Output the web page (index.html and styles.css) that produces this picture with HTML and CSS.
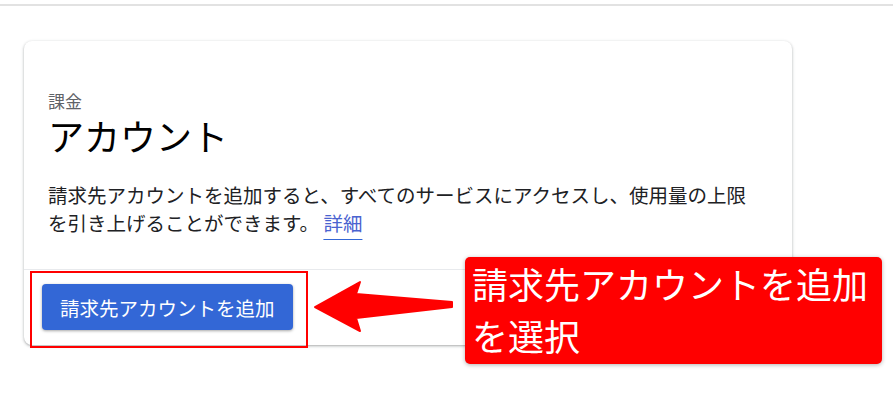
FILE: index.html
```html
<!DOCTYPE html>
<html lang="ja">
<head>
    <meta charset="UTF-8">
    <meta name="viewport" content="width=device-width, initial-scale=1.0">
    <title>課金 - アカウント</title>
    <link rel="stylesheet" href="styles.css">
</head>
<body>
    <div class="page">
        <div class="top-bar"></div>

        <main class="content">
            <section class="card">
                <div class="card-body">
                    <div class="overline">課金</div>
                    <h1 class="card-title">アカウント</h1>
                    <p class="card-text">請求先アカウントを追加すると、すべてのサービスにアクセスし、使用量の上限を引き上げることができます。 <a href="#" class="link">詳細</a></p>
                </div>
                <div class="card-actions">
                    <button class="btn-primary">請求先アカウントを追加</button>
                </div>
            </section>
        </main>

        <!-- annotations drawn over the screenshot -->
        <div class="highlight-box"></div>
        <svg class="arrow" width="150" height="60" viewBox="0 0 150 60">
            <polygon points="5,29 50,4 46,16 142,24 142,29 46,40 50,53" fill="#ff0000" stroke="#ff0000" stroke-width="2" stroke-linejoin="round"/>
        </svg>
        <div class="callout">請求先アカウントを追加<br>を選択</div>
    </div>
</body>
</html>
```

FILE: styles.css
```css
body {
    margin: 0;
    background: #fff;
    font-family: "Noto Sans CJK JP", "Noto Sans", sans-serif;
    color: #202124;
}

.page {
    position: relative;
    width: 893px;
    height: 408px;
    overflow: hidden;
}

.top-bar {
    margin-top: 4px;
    height: 2px;
    background: #e2e2e2;
}

.content {
    padding: 35px 0 0 24px;
}

.card {
    width: 768px;
    height: 304px;
    box-sizing: border-box;
    background: #fff;
    border-radius: 8px;
    box-shadow: 0 1px 2px rgba(60, 64, 67, 0.3), 0 1px 3px 1px rgba(60, 64, 67, 0.12);
    display: flex;
    flex-direction: column;
}

.card-body {
    padding: 50px 24px 0 24px;
    height: 229px;
    box-sizing: border-box;
    border-bottom: 1px solid #e8eaed;
}

.overline {
    font-size: 17px;
    line-height: 20px;
    color: #5f6368;
}

.card-title {
    margin: 2px 0 0 0;
    font-size: 36px;
    font-weight: 400;
    line-height: 44px;
    color: #000;
}

.card-text {
    margin: 24px 0 0 0;
    max-width: 710px;
    font-size: 19.5px;
    line-height: 28px;
}

.link {
    color: #4a63d0;
    text-decoration: underline;
    text-decoration-color: #3367d6;
    text-underline-offset: 8px;
}

.card-actions {
    padding: 14px 18px;
}

.btn-primary {
    height: 46px;
    padding: 0 18px;
    border: none;
    border-radius: 4px;
    background: #3367d6;
    color: #fff;
    font-family: inherit;
    font-size: 19.5px;
    box-shadow: 0 1px 3px rgba(0, 0, 0, 0.35);
}

.highlight-box {
    position: absolute;
    left: 30px;
    top: 271px;
    width: 274px;
    height: 73px;
    border: 2px solid #ff0000;
}

.arrow {
    position: absolute;
    left: 310px;
    top: 278px;
}

.callout {
    position: absolute;
    left: 465px;
    top: 257px;
    width: 417px;
    height: 107px;
    box-sizing: border-box;
    padding-left: 7px;
    background: #ff0000;
    border-radius: 5px;
    box-shadow: 0 1px 4px rgba(0, 0, 0, 0.3);
    color: #fff;
    font-size: 36px;
    line-height: 52px;
    white-space: nowrap;
}
```
